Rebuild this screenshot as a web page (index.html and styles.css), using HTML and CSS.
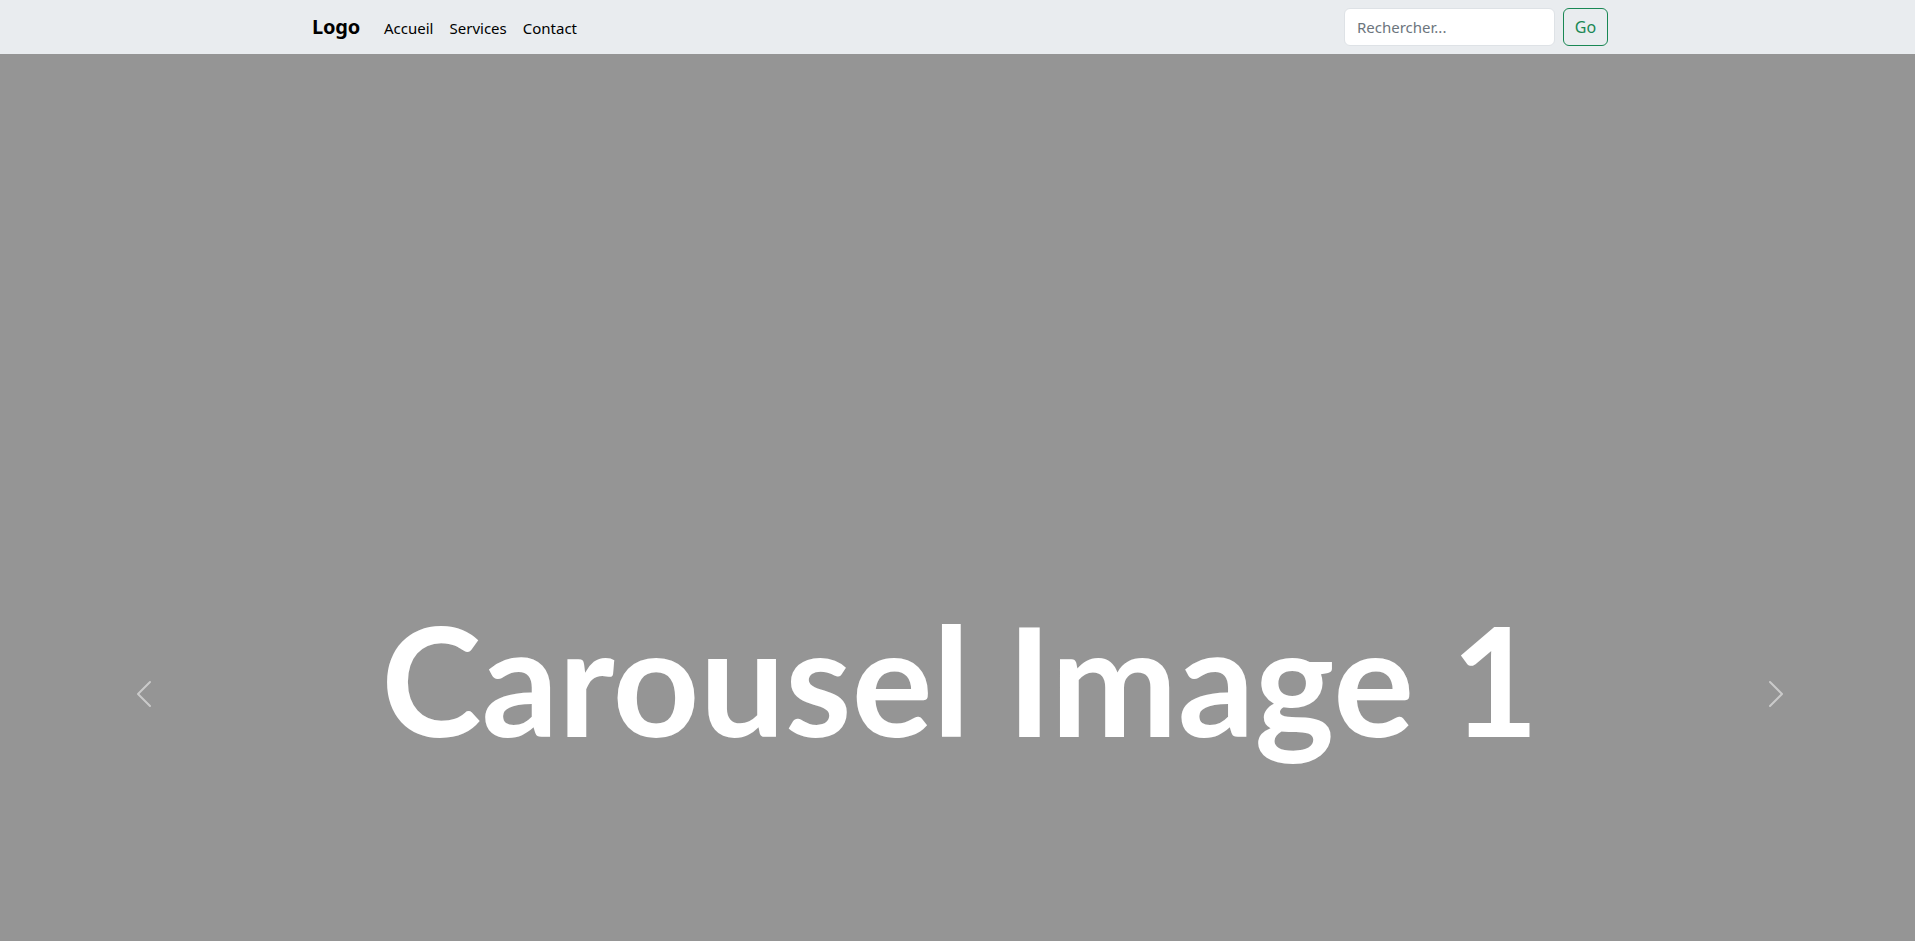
FILE: index.html
```html
<!DOCTYPE html>
<html lang="fr">
<head>
<meta charset="utf-8">
<title>Carousel</title>
<link rel="stylesheet" href="styles.css">
</head>
<body>
<nav class="navbar">
  <div class="container">
    <a class="brand" href="#">Logo</a>
    <ul class="nav">
      <li><a class="nav-link" href="#">Accueil</a></li>
      <li><a class="nav-link" href="#">Services</a></li>
      <li><a class="nav-link" href="#">Contact</a></li>
    </ul>
    <form class="search">
      <input class="search-input" type="search" placeholder="Rechercher...">
      <button class="btn-go" type="button">Go</button>
    </form>
  </div>
</nav>
<div class="carousel">
  <div class="slide">
    <h1 class="slide-title">Carousel Image 1</h1>
  </div>
  <button class="control control-prev" type="button" aria-label="Précédent">
    <svg class="control-icon" viewBox="0 0 16 16"><path d="M11.354 1.646a.5.5 0 0 1 0 .708L5.707 8l5.647 5.646a.5.5 0 0 1-.708.708l-6-6a.5.5 0 0 1 0-.708l6-6a.5.5 0 0 1 .708 0z"/></svg>
  </button>
  <button class="control control-next" type="button" aria-label="Suivant">
    <svg class="control-icon" viewBox="0 0 16 16"><path d="M4.646 1.646a.5.5 0 0 1 .708 0l6 6a.5.5 0 0 1 0 .708l-6 6a.5.5 0 0 1-.708-.708L10.293 8 4.646 2.354a.5.5 0 0 1 0-.708z"/></svg>
  </button>
</div>
</body>
</html>
```
FILE: styles.css
```css
html {
  scrollbar-width: none;
  overflow-x: hidden;
}
html::-webkit-scrollbar {
  display: none;
}
body {
  margin: 0;
  min-width: 1920px;
  font-family: "Noto Sans", "Open Sans", sans-serif;
  font-size: 16px;
  line-height: 1.5;
  color: #212529;
  background: #fff;
}
.navbar {
  background: #e9ecef;
  padding: 8px 0;
}
.container {
  width: 1320px;
  height: 38px;
  margin: 0 auto;
  padding: 0 12px;
  box-sizing: border-box;
  display: flex;
  align-items: center;
}
.brand {
  font-size: 20px;
  font-weight: 700;
  color: #000;
  text-decoration: none;
  margin-right: 16px;
  line-height: 1.5;
  letter-spacing: -0.2px;
}
.nav {
  list-style: none;
  display: flex;
  margin: 0;
  padding: 0;
  flex: 1;
}
.nav-link {
  display: block;
  padding: 9px 8px 7px;
  font-size: 15px;
  color: #000;
  text-decoration: none;
}
.search {
  display: flex;
  gap: 8px;
}
.search-input {
  width: 211px;
  box-sizing: border-box;
  height: 38px;
  padding: 6px 12px;
  font-family: "Noto Sans", "Open Sans", sans-serif;
  font-size: 15px;
  color: #212529;
  background: #fff;
  border: 1px solid #dee2e6;
  border-radius: 6px;
  outline: none;
}
.search-input::placeholder {
  color: #6c757d;
}
.btn-go {
  height: 38px;
  box-sizing: border-box;
  width: 45px;
  padding: 6px 0;
  font-family: "Noto Sans", "Open Sans", sans-serif;
  font-size: 16px;
  color: #198754;
  background: transparent;
  border: 1px solid #198754;
  border-radius: 6px;
}
.carousel {
  position: relative;
  height: 1280px;
  background: #959595;
}
.slide {
  height: 100%;
  display: flex;
  align-items: center;
  justify-content: center;
}
.slide-title {
  margin: 0;
  font-family: Lato, sans-serif;
  font-weight: 700;
  font-size: 151.5px;
  line-height: 1;
  color: #fff;
  padding-bottom: 31px;
}
.control {
  position: absolute;
  top: 0;
  bottom: 0;
  width: 15%;
  display: flex;
  align-items: center;
  justify-content: center;
  background: none;
  border: 0;
  padding: 0;
  opacity: 0.5;
  cursor: pointer;
}
.control-prev {
  left: 0;
}
.control-next {
  right: 0;
}
.control-icon {
  width: 32px;
  height: 32px;
  fill: #fff;
}
```
